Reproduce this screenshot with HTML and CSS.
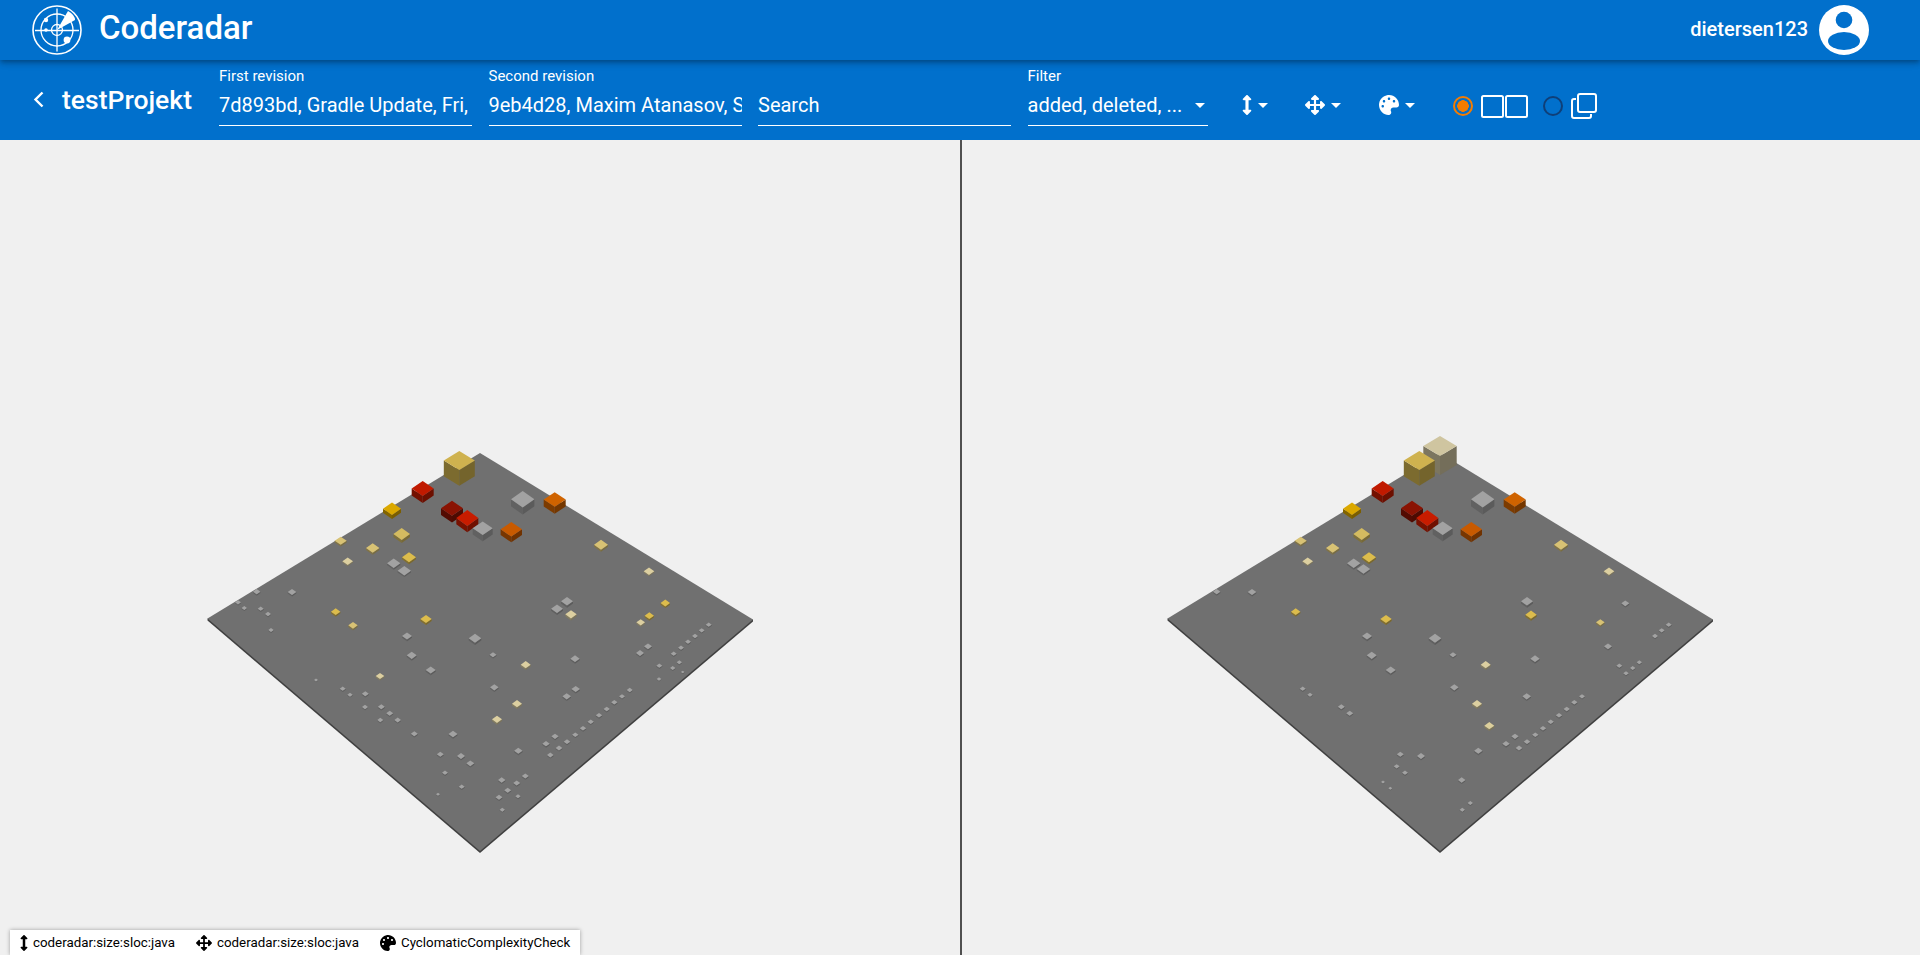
FILE: index.html
```html
<!DOCTYPE html>
<html lang="en">
<head>
  <meta charset="UTF-8">
  <title>Coderadar</title>
  <link rel="stylesheet" href="styles.css">
</head>
<body>
  <svg class="icon-defs" aria-hidden="true">
    <symbol id="i-height" viewBox="0 0 256 512"><path d="M214.059 377.941H168V134.059h46.059c21.382 0 32.09-25.851 16.971-40.971L144.971 7.029c-9.373-9.373-24.568-9.373-33.941 0L24.971 93.088c-15.119 15.119-4.411 40.971 16.971 40.971H88v243.882H41.941c-21.382 0-32.09 25.851-16.971 40.971l86.059 86.059c9.373 9.373 24.568 9.373 33.941 0l86.059-86.059c15.12-15.119 4.412-40.971-16.97-40.971z"/></symbol>
    <symbol id="i-move" viewBox="0 0 512 512"><path d="M352.201 425.775l-79.196 79.196c-9.373 9.373-24.568 9.373-33.941 0l-79.196-79.196c-15.119-15.119-4.411-40.971 16.971-40.97h51.162L228 284H127.196v51.162c0 21.382-25.851 32.09-40.971 16.971L7.029 272.937c-9.373-9.373-9.373-24.569 0-33.941L86.225 159.8c15.119-15.119 40.971-4.411 40.971 16.971V228H228V127.196h-51.23c-21.382 0-32.09-25.851-16.971-40.971l79.196-79.196c9.373-9.373 24.568-9.373 33.941 0l79.196 79.196c15.119 15.119 4.411 40.971-16.971 40.971h-51.162V228h100.804v-51.162c0-21.382 25.851-32.09 40.97-16.971l79.196 79.196c9.373 9.373 9.373 24.569 0 33.941L425.773 352.2c-15.119 15.119-40.971 4.411-40.97-16.971V284H284v100.804h51.23c21.382 0 32.09 25.851 16.971 40.971z"/></symbol>
    <symbol id="i-palette" viewBox="0 0 512 512"><path d="M204.3 5C104.9 24.4 24.8 104.3 5.2 203.4c-37 187 131.7 326.4 258.8 306.7 41.2-6.4 61.4-54.6 42.5-91.7-23.1-45.4 9.9-98.4 60.9-98.4h79.7c35.8 0 64.8-29.6 64.9-65.3C511.5 97.1 368.1-26.9 204.3 5zM96 320c-17.7 0-32-14.3-32-32s14.3-32 32-32 32 14.3 32 32-14.3 32-32 32zm32-128c-17.7 0-32-14.3-32-32s14.3-32 32-32 32 14.3 32 32-14.3 32-32 32zm128-64c-17.7 0-32-14.3-32-32s14.3-32 32-32 32 14.3 32 32-14.3 32-32 32zm128 64c-17.7 0-32-14.3-32-32s14.3-32 32-32 32 14.3 32 32-14.3 32-32 32z"/></symbol>
  </svg>

  <!-- top bar -->
  <header class="app-bar">
    <svg class="logo" viewBox="0 0 50 50">
      <circle cx="25" cy="25" r="24" fill="none" stroke="#fff" stroke-width="1.6"/>
      <circle cx="25" cy="25" r="16" fill="none" stroke="#fff" stroke-width="1.3"/>
      <circle cx="25" cy="25" r="5.5" fill="none" stroke="#fff" stroke-width="1.3"/>
      <path d="M3 25.5h44M25 3.5v43" stroke="#fff" stroke-width="1.3"/>
      <path d="M25 25L36 6Q43 10 43 15Z" fill="#fff"/>
      <circle cx="14" cy="15" r="2.2" fill="#fff"/>
      <circle cx="14" cy="25" r="1.8" fill="#fff"/>
      <circle cx="35" cy="35" r="3.4" fill="#fff"/>
    </svg>
    <h1 class="brand">Coderadar</h1>
    <span class="user-name">dietersen123</span>
    <svg class="avatar" viewBox="0 0 50 50">
      <circle cx="25" cy="25" r="25" fill="#fff"/>
      <circle cx="25" cy="15" r="8.3" fill="#0170cc"/>
      <ellipse cx="25" cy="36" rx="16" ry="9" fill="#0170cc"/>
    </svg>
  </header>

  <!-- controls -->
  <div class="tool-bar">
    <svg class="back" viewBox="0 0 11 17"><path d="M9.5 1.5L2.5 8.5l7 7" fill="none" stroke="#fff" stroke-width="2.4"/></svg>
    <h2 class="project">testProjekt</h2>
    <div class="field">
      <label>First revision</label>
      <div class="value">7d893bd, Gradle Update, Fri,</div>
    </div>
    <div class="field">
      <label>Second revision</label>
      <div class="value">9eb4d28, Maxim Atanasov, S</div>
    </div>
    <div class="field">
      <div class="value">Search</div>
    </div>
    <div class="field field-filter">
      <label>Filter</label>
      <div class="value">added, deleted, ...<span class="caret"></span></div>
    </div>
    <div class="menus">
      <div class="menu menu-height"><svg class="tool-icon"><use href="#i-height"/></svg><span class="caret"></span></div>
      <div class="menu"><svg class="tool-icon"><use href="#i-move"/></svg><span class="caret"></span></div>
      <div class="menu"><svg class="tool-icon"><use href="#i-palette"/></svg><span class="caret"></span></div>
    </div>
    <div class="views">
      <span class="radio radio-on"></span>
      <svg class="split" viewBox="0 0 47 23"><rect x="1" y="1" width="21" height="21" rx="1.5"/><rect x="25" y="1" width="21" height="21" rx="1.5"/></svg>
      <span class="radio"></span>
      <svg class="overlap" viewBox="0 0 26 26"><rect x="7" y="1" width="18" height="18" rx="2"/><path d="M5 6H3a2 2 0 0 0-2 2v15a2 2 0 0 0 2 2h15a2 2 0 0 0 2-2v-2"/></svg>
    </div>
  </div>

  <!-- two city views -->
  <main class="views-area">
    <div class="pane pane-left" id="pane-left"></div>
    <div class="pane" id="pane-right"></div>
    <div class="legend">
      <svg class="legend-icon legend-height"><use href="#i-height"/></svg>
      <span>coderadar:size:sloc:java</span>
      <svg class="legend-icon"><use href="#i-move"/></svg>
      <span>coderadar:size:sloc:java</span>
      <svg class="legend-icon"><use href="#i-palette"/></svg>
      <span>CyclomaticComplexityCheck</span>
    </div>
  </main>

  <script src="scene.js"></script>
</body>
</html>
```

FILE: styles.css
```css
* {
  box-sizing: border-box;
}

html, body {
  height: 100%;
}

body {
  display: flex;
  flex-direction: column;
  margin: 0;
  overflow: hidden;
  font-family: Roboto, "Liberation Sans", sans-serif;
  background-color: #f0f0f0;
  color: #fff;
}

.icon-defs {
  display: none;
}

.app-bar {
  position: relative;
  z-index: 2;
  display: flex;
  align-items: center;
  flex: none;
  height: 60px;
  padding: 0 51px 0 32px;
  background-color: #0170cc;
  box-shadow: 0 2px 4px -1px rgba(0,0,0,0.2), 0 4px 5px 0 rgba(0,0,0,0.14), 0 1px 10px 0 rgba(0,0,0,0.12);
}

.logo {
  width: 50px;
  height: 50px;
}

.brand {
  flex: 1;
  margin: 0 0 5px 17px;
  font-size: 33px;
  font-weight: 500;
}

.user-name {
  margin-bottom: 2px;
  font-size: 20px;
  font-weight: 500;
}

.avatar {
  width: 50px;
  height: 50px;
  margin-left: 11px;
}

.tool-bar {
  display: flex;
  align-items: flex-start;
  flex: none;
  height: 80px;
  padding-left: 33px;
  background-color: #0170cc;
}

.back {
  width: 11px;
  height: 17px;
  margin-top: 31px;
}

.project {
  width: 157px;
  margin: 24px 0 0 18px;
  font-size: 26.5px;
  line-height: 32px;
  font-weight: 500;
  white-space: nowrap;
}

.field {
  display: flex;
  flex-direction: column;
  justify-content: flex-end;
  width: 253px;
  height: 66px;
  margin-right: 16.5px;
  padding-bottom: 4px;
  border-bottom: 1px solid #fff;
}

.field label {
  font-size: 15px;
  line-height: 16px;
  margin-bottom: 5px;
}

.value {
  position: relative;
  height: 32px;
  font-size: 20px;
  line-height: 32px;
  white-space: nowrap;
  overflow: hidden;
}

.field-filter {
  width: 180px;
  margin-right: 0;
}

.field-filter .caret {
  position: absolute;
  right: 3px;
  top: 14px;
}

.caret {
  display: inline-block;
  border-top: 5px solid #fff;
  border-left: 5px solid transparent;
  border-right: 5px solid transparent;
}

.menus {
  display: flex;
  margin: 35px 0 0 34px;
}

.menu {
  display: flex;
  align-items: center;
  width: 74px;
  height: 20px;
  gap: 6px;
}

.menu-height {
  width: 63px;
}

.tool-icon {
  width: 20px;
  height: 20px;
  fill: #fff;
}

.menu-height .tool-icon {
  width: 10px;
}

.views {
  display: flex;
  align-items: center;
  height: 28px;
  margin-top: 32px;
}

.radio {
  width: 20px;
  height: 20px;
  border: 2px solid #0f3f78;
  border-radius: 50%;
}

.radio-on {
  border-color: #f57c00;
  background: radial-gradient(circle, #f57c00 0 5.5px, transparent 6px);
}

.split {
  width: 47px;
  height: 23px;
  margin: 0 15px 0 8px;
  fill: none;
  stroke: #fff;
  stroke-width: 2;
}

.overlap {
  width: 26px;
  height: 26px;
  margin-left: 8px;
  fill: none;
  stroke: #fff;
  stroke-width: 2;
}

.views-area {
  position: relative;
  display: flex;
  flex: 1;
  min-height: 0;
}

.pane {
  position: relative;
  width: 960px;
  height: 815px;
}

.pane svg {
  position: absolute;
  top: 0;
  left: 0;
}

.pane-left::after {
  content: "";
  position: absolute;
  top: 0;
  right: -2px;
  width: 2px;
  height: 100%;
  background-color: #505050;
}

/* legend in the lower left corner */
.legend {
  position: absolute;
  left: 10px;
  bottom: 0;
  display: flex;
  align-items: center;
  height: 25px;
  padding: 0 10px;
  background-color: #fff;
  color: #000;
  font-size: 13.33px;
  box-shadow: 0 0 4px rgba(0,0,0,0.35);
  white-space: nowrap;
}

.legend-icon {
  width: 16px;
  height: 16px;
  margin: 0 5px 0 21px;
  fill: #000;
}

.legend-icon:first-child {
  margin-left: 0;
}

.legend-height {
  width: 8px;
}
```

FILE: scene.js
```js
// building tops, side faces are derived from them
const GRAY = "#a2a2a2", PALE = "#d8c274", LIGHT = "#dccfa0", GOLD = "#dcbc4c";

// x, y of the top face centre, half width, colour, [half height, depth]
const big = [
  [459.3, 460.5, 15.5, "#cfb24f", 9.5, 15.7],
  [422.7, 488.5, 11, "#c01a00", 7.5, 7],
  [452, 508.2, 11, "#8a1303", 7.5, 6.7],
  [467.3, 518, 11, "#c81c00", 8, 6.3],
  [482.7, 528.3, 10, GRAY, 6.7, 6.3],
  [522.7, 499.3, 11.7, GRAY, 8.3, 7],
  [554.7, 499.5, 11, "#cf6300", 7.2, 7],
  [511.3, 529.3, 10.7, "#c85a00", 7.3, 5.7],
  [392, 508.7, 9, "#dba800", 6.3, 4],
  [401.7, 534, 8.3, "#d4bb60", 6, 3],
  [340.7, 540.7, 6, PALE, 4, 1.7],
  [372.7, 548, 6.7, PALE, 4.7, 2],
  [347.7, 561.3, 5.3, LIGHT, 3.7, 1.3],
  [409, 557.3, 7, GOLD, 5, 2],
  [393.7, 563.3, 6.7, GRAY, 4.7, 1.7],
  [601, 544.7, 7, PALE, 5, 2],
  [649, 571.3, 5.3, LIGHT, 3.7, 1.3]
];

const common = [
  [567, 601.3, 6, GRAY], [256.7, 591.7, 3.7, GRAY], [292, 592, 4.3, GRAY],
  [335.7, 611.7, 4.7, GOLD], [426, 619, 5.7, GOLD], [407, 636, 5, GRAY],
  [475, 638.3, 6.3, GRAY], [411.7, 655.3, 5, GRAY], [493, 654.7, 3.5, GRAY],
  [430.7, 670, 5, GRAY], [525.7, 664.7, 5, LIGHT], [342.7, 688.7, 3, GRAY],
  [350, 694.7, 2.7, GRAY], [381.3, 706.7, 3.5, GRAY], [389.7, 713.3, 3.5, GRAY],
  [494.3, 687.3, 4.3, GRAY], [517, 703.7, 5, LIGHT], [518.3, 750.7, 4.2, GRAY],
  [440.3, 754.3, 3.5, GRAY], [461, 756, 4, GRAY], [445, 772.7, 3, GRAY],
  [501.7, 780, 3.7, GRAY], [502.3, 809.7, 2.7, GRAY], [575, 658.7, 4.7, GRAY],
  [648, 646.3, 4, GRAY], [566.7, 696.3, 4.3, GRAY], [555, 736.3, 3.7, GRAY],
  [546, 743.7, 3.7, GRAY], [559, 748, 3.3, GRAY], [567, 741.7, 3.3, GRAY],
  [575.3, 734.7, 3.2, GRAY], [583, 728.3, 3.2, GRAY], [590.7, 721.7, 3.2, GRAY],
  [599, 715.3, 3.2, GRAY], [606.7, 709, 3.2, GRAY], [614.3, 702.3, 3.2, GRAY],
  [622, 696.3, 3, GRAY], [659.3, 665.7, 3, GRAY], [672.7, 668, 2.7, GRAY],
  [679.3, 662.3, 2.7, GRAY], [695, 636, 3, GRAY], [701.7, 630.3, 3, GRAY],
  [708.7, 624.7, 3, GRAY]
];

const leftOnly = [
  [404.3, 570.7, 6.7, GRAY, 4.7, 1.7],
  [557, 608.7, 6, GRAY], [571, 614.3, 5.7, LIGHT], [665.3, 603, 4.7, GOLD],
  [649.3, 615.7, 4.7, GOLD], [640.7, 622.3, 4.3, LIGHT], [238, 602.3, 3, GRAY],
  [244.3, 608, 2.7, GRAY], [260.7, 608.7, 3, GRAY], [268, 614, 3, GRAY],
  [271, 630, 2.7, GRAY], [353, 625.3, 4.7, PALE], [380, 676, 4.3, LIGHT],
  [316, 680, 2, GRAY], [365.3, 693.7, 3.5, GRAY], [365, 707, 3, GRAY],
  [380.3, 720, 3, GRAY], [397.7, 720, 3.3, GRAY], [414.3, 733.7, 3.5, GRAY],
  [453, 734, 4.5, GRAY], [497, 719.3, 5, LIGHT], [550.3, 755, 3.3, GRAY],
  [470.3, 763.3, 4, GRAY], [461.7, 786.7, 3, GRAY], [438, 794.3, 2, GRAY],
  [516.7, 783, 3.5, GRAY], [525.3, 776, 3.5, GRAY], [507.7, 790.3, 3.5, GRAY],
  [499, 797.3, 3.5, GRAY], [518, 796.3, 2.7, GRAY], [640, 653, 4, GRAY],
  [575.7, 689, 4.3, GRAY], [629.7, 690, 3, GRAY], [659, 679, 2.3, GRAY],
  [682.7, 672, 1.8, GRAY], [673.7, 653.7, 3, GRAY], [681, 647.7, 3, GRAY],
  [688, 641.7, 3, GRAY]
];

const rightOnly = [
  [480, 446, 16.7, "#cfc5a0", 10, 19],
  [403.5, 569, 6.7, GRAY, 4.7, 1.7],
  [665.3, 603.3, 4, GRAY], [571, 614.7, 5.7, GOLD], [640.3, 622.3, 4.3, PALE],
  [529.3, 725.7, 5, "#dccf9c"], [436.7, 766.3, 3, GRAY], [423, 782, 2, GRAY],
  [430.3, 788.3, 2, GRAY], [510.3, 803, 2.7, GRAY], [666, 673.3, 2.8, GRAY]
];

// side colour for a top colour
function shade(hex, f) {
  const n = parseInt(hex.slice(1), 16);
  const c = [n >> 16, (n >> 8) & 255, n & 255].map(v => Math.round(v * f));
  return `rgb(${c.join(",")})`;
}

function poly(points, fill) {
  return `<polygon points="${points.map(p => p.join(",")).join(" ")}" fill="${fill}"/>`;
}

function cube([x, y, w, color, hh, d]) {
  const h = hh || w * 0.72;
  const depth = d || w * 0.35;
  return poly([[x - w, y], [x, y + h], [x, y + h + depth], [x - w, y + depth]], shade(color, 0.6))
    + poly([[x + w, y], [x, y + h], [x, y + h + depth], [x + w, y + depth]], shade(color, 0.56))
    + poly([[x, y - h], [x + w, y], [x, y + h], [x - w, y]], color);
}

function drawCity(id, extra) {
  const list = big.concat(common, extra).sort((a, b) => a[1] - b[1]);
  const plate = poly([[207.5, 618.5], [207.5, 620.5], [480, 853], [753, 621.5], [753, 619.5]], "#404040")
    + poly([[480, 453], [753, 619.5], [480, 851], [207.5, 618.5]], "#707070");
  document.getElementById(id).innerHTML =
    `<svg width="960" height="815" viewBox="0 140 960 815">${plate}${list.map(cube).join("")}</svg>`;
}

drawCity("pane-left", leftOnly);
drawCity("pane-right", rightOnly);
```
